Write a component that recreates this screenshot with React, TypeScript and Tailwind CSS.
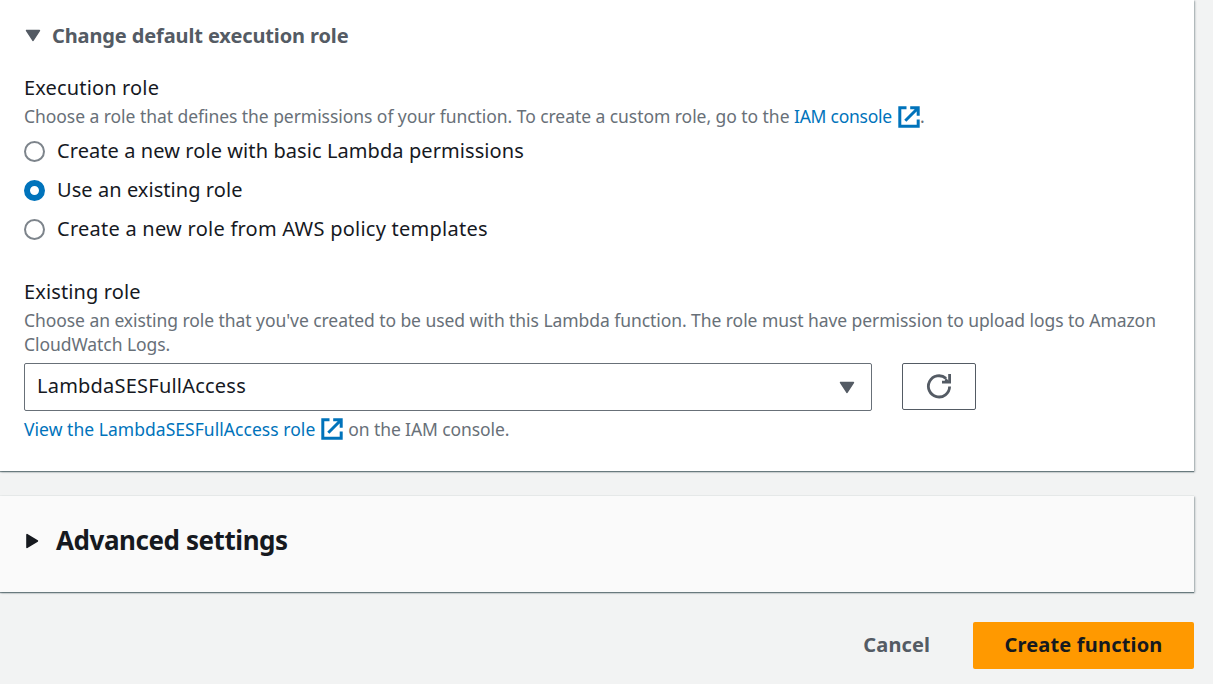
import type { ReactNode } from "react";

function ExternalIcon({ className = "" }: { className?: string }) {
  return (
    <svg viewBox="0 0 22 22" className={`inline-block h-[22px] w-[22px] shrink-0 ${className}`} fill="none" stroke="#0073bb" strokeWidth="3">
      <path d="M8.5 1.8H1.8V20.2H20.2V13.5" />
      <path d="M12.2 1.8H20.2V9.8M20 2L7.3 14.7" />
    </svg>
  );
}

function CaretDown({ className = "" }: { className?: string }) {
  return (
    <svg viewBox="0 0 16 13" className={`h-[13px] w-4 shrink-0 ${className}`}>
      <path d="M1.6 1.5H14.4L8 11.4Z" fill="#545b64" stroke="#545b64" strokeWidth="1.6" strokeLinejoin="round" />
    </svg>
  );
}

function Radio({ checked, children }: { checked?: boolean; children: ReactNode }) {
  return (
    <label className="flex h-[39px] items-center">
      <span
        className={
          checked
            ? "h-[21px] w-[21px] shrink-0 rounded-full border-[6px] border-[#0073bb] bg-white"
            : "h-[21px] w-[21px] shrink-0 rounded-full border-2 border-[#7d848b] bg-white"
        }
      />
      <span className="ml-3 pb-[2px] whitespace-nowrap">{children}</span>
    </label>
  );
}

export default function App() {
  return (
    <main className="h-[684px] w-full overflow-hidden bg-[#f2f3f3] font-['Noto_Sans',sans-serif] text-[20px] leading-[30px] text-[#16191f]">
      <section className="h-[471px] w-[1194px] bg-white pl-6 shadow-[0_1px_1px_0_rgba(0,28,36,0.45),1px_1px_2px_0_rgba(0,28,36,0.3)]">
        <div className="flex h-[73px] items-center pb-[2px]">
          <CaretDown className="ml-[1px]" />
          <h2 className="ml-[11px] font-bold tracking-[-0.12px] whitespace-nowrap text-[#545b64]">Change default execution role</h2>
        </div>
        <h3 className="h-[30px] tracking-[0.15px] whitespace-nowrap">Execution role</h3>
        <p className="flex h-[29px] items-center pb-[2px] text-[17.5px] whitespace-nowrap text-[#687078]">
          <span className="pb-[1px] tracking-[-0.053px]">Choose a role that defines the permissions of your function. To create a custom role, go to the&nbsp;</span>
          <a className="pb-[1px] tracking-[-0.25px] text-[#0073bb]">IAM console</a>
          <ExternalIcon className="ml-1.5" />
          <span className="pb-[1px]">.</span>
        </p>
        <div className="h-[145px]">
          <Radio><span className="tracking-[0.08px]">Create a new role with basic Lambda permissions</span></Radio>
          <Radio checked><span className="tracking-[0.06px]">Use an existing role</span></Radio>
          <Radio><span className="tracking-[0.25px]">Create a new role from AWS policy templates</span></Radio>
        </div>
        <h3 className="h-[31px] tracking-[0.12px] whitespace-nowrap">Existing role</h3>
        <p className="h-[55px] text-[17.5px] leading-[24px] whitespace-nowrap text-[#687078]">
          <span className="block tracking-[-0.063px]">Choose an existing role that you've created to be used with this Lambda function. The role must have permission to upload logs to Amazon</span>
          <span className="block tracking-[-0.06px]">CloudWatch Logs.</span>
        </p>
        <div className="flex items-start">
          <button className="flex h-[48px] w-[848px] items-center justify-between rounded-[2px] border border-[#687078] bg-white pr-4 pl-3">
            <span className="pb-[2px] tracking-[0.22px]">LambdaSESFullAccess</span>
            <CaretDown />
          </button>
          <button className="ml-[30px] flex h-[47px] w-[74px] items-center justify-center rounded-[2px] border border-[#545b64] bg-white pb-[2px]">
            <svg viewBox="0 0 26 26" className="h-[26px] w-[26px]" fill="none" stroke="#545b64" strokeWidth="2.8">
              <path d="M23.6 13.5A10.6 10.6 0 1 1 20 5.4" />
              <path d="M19.6 4.6L22.4 7.4V9H18.5Z" fill="#545b64" stroke="none" />
              <path d="M16 9.2H23.6V1" />
            </svg>
          </button>
        </div>
        <p className="flex h-[36px] items-center text-[17.5px] whitespace-nowrap text-[#687078]">
          <a className="pb-[1px] tracking-[0.04px] text-[#0073bb]">View the LambdaSESFullAccess role</a>
          <ExternalIcon className="ml-1.5" />
          <span className="ml-[5px] pb-[1px] tracking-[-0.1px]">on the IAM console.</span>
        </p>
      </section>
      <section className="mt-[25px] flex h-[96px] w-[1194px] items-center bg-[#fafafa] pb-[6px] pl-[25px] shadow-[0_1px_1px_0_rgba(0,28,36,0.45),1px_1px_2px_0_rgba(0,28,36,0.3),0_-1px_0_0_#eaeded]">
        <svg viewBox="0 0 14 16" className="h-4 w-3.5">
          <path d="M2 1.6V14.4L12.4 8Z" fill="#16191f" stroke="#16191f" strokeWidth="1.6" strokeLinejoin="round" />
        </svg>
        <h2 className="ml-[17px] pb-[2px] text-[26px] font-bold tracking-[-0.44px] whitespace-nowrap">Advanced settings</h2>
      </section>
      <footer className="mt-[30px] flex h-[47px] w-[1194px] items-center justify-end font-bold">
        <button className="mr-[43px] pb-[2px] tracking-[0.1px] text-[#545b64]">Cancel</button>
        <button className="h-[47px] w-[221px] rounded-[2px] bg-[#ff9900] pb-[2px] tracking-[0.18px] whitespace-nowrap">Create function</button>
      </footer>
    </main>
  );
}
